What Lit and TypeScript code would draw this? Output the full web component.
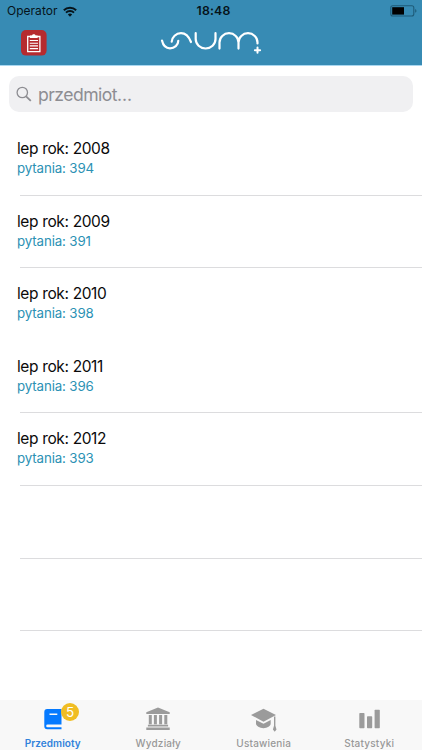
import { LitElement, html, css, svg } from "lit";
import { customElement } from "lit/decorators.js";
import { classMap } from "lit/directives/class-map.js";

const rows = [
  { title: "lep rok: 2008", sub: "pytania: 394" },
  { title: "lep rok: 2009", sub: "pytania: 391" },
  { title: "lep rok: 2010", sub: "pytania: 398", noLine: true },
  { title: "lep rok: 2011", sub: "pytania: 396" },
  { title: "lep rok: 2012", sub: "pytania: 393" },
  {},
  {},
] as { title?: string; sub?: string; noLine?: boolean }[];

const tabs = [
  {
    label: "Przedmioty",
    active: true,
    badge: "5",
    icon: svg`<path fill-rule="evenodd" d="M8.200 5H22.500V20.600H8.500a1.100 1.100 0 0 0 0 2.600H22.500V25.200H8.200a2.900 2.900 0 0 1-2.900-2.900V7.900A2.900 2.900 0 0 1 8.200 5ZM10.500 9.600v1.500h7.800V9.600Z"/>`,
  },
  {
    label: "Wydziały",
    icon: svg`<path d="M13 3.500 24.700 8.300v1.700H1.300V8.300ZM3.800 11h3v9.200h-3zM8.900 11h3v9.200h-3zM14.100 11h3v9.200h-3zM19.300 11h3v9.200h-3zM2.900 20.800h20.200v1.800H2.900zM1.300 23.600h23.400V26H1.300z"/>`,
  },
  {
    label: "Ustawienia",
    icon: svg`<path d="M13.500 4.700 26 11 13.500 17.700 1 11ZM6 16l7.500 3.800 7.200-3.700v3.400c0 2.500-3.400 4.700-7.200 4.700S6 22 6 19.500ZM24 12.600h1.400v9.200l1.100 3.600-1.800 2.300-1.800-2.300 1.100-3.600Z"/>`,
  },
  {
    label: "Statystyki",
    icon: svg`<rect x="3.300" y="9" width="5.200" height="15.300" rx=".7"/><rect x="11" y="12.300" width="5.200" height="12" rx=".7"/><rect x="18.600" y="5.700" width="5.200" height="18.600" rx=".7"/>`,
  },
];

@customElement("app-root")
export class AppRoot extends LitElement {
  static styles = css`
    :host {
      display: flex;
      flex-direction: column;
      width: 422px;
      height: 750px;
      overflow: hidden;
      background: #fff;
      font-family: Inter, "Liberation Sans", sans-serif;
      box-sizing: border-box;
    }
    svg { display: block; }
    .header {
      height: 66px;
      flex: none;
      box-sizing: border-box;
      background: #378bb4;
      border-bottom: 1px solid #a9d7f0;
    }
    .status {
      display: grid;
      grid-template-columns: 1fr auto 1fr;
      align-items: center;
      height: 22px;
      padding: 0 4px 0 7px;
      font-size: 12px;
      line-height: 22px;
      color: #06131a;
    }
    .carrier { display: flex; align-items: center; gap: 6px; letter-spacing: 0.02px; }
    .time { font-weight: 600; font-size: 12.3px; letter-spacing: 0.15px; padding-left: 2px; }
    .battery { justify-self: end; }
    .nav {
      display: grid;
      grid-template-columns: 1fr 102px 1fr;
      height: 43px;
      padding: 0 21px;
    }
    .clip { margin-top: 8px; }
    .logo { margin-top: 6px; }
    .search {
      flex: none;
      display: flex;
      align-items: center;
      gap: 5px;
      height: 36px;
      margin: 10px 9px 0 9px;
      padding-left: 7px;
      border-radius: 10px;
      background: #f0f0f2;
      color: #8d8d92;
      font-size: 17.6px;
      letter-spacing: -0.55px;
    }
    .dots { letter-spacing: 0; }
    .list { flex: 1; padding-top: 11px; }
    .row {
      height: 72.6px;
      box-sizing: border-box;
      padding: 15px 0 0 17px;
      background: linear-gradient(#dcdcde, #dcdcde) 20px 100% / 100% 1px no-repeat;
    }
    .noline { background: none; }
    .title { font-size: 15.5px; line-height: 22px; color: #0a0a0a; letter-spacing: -0.42px; word-spacing: 0.3px; }
    .sub { font-size: 13.3px; line-height: 16px; color: #2b91b4; letter-spacing: -0.13px; }
    .tabs {
      flex: none;
      display: grid;
      grid-template-columns: repeat(4, 1fr);
      height: 50px;
      background: #f8f8f8;
      color: #999;
    }
    .tab {
      display: flex;
      flex-direction: column;
      align-items: center;
      padding-top: 4px;
      font-size: 10px;
      line-height: 15px;
      font-weight: 500;
      letter-spacing: 0.2px;
    }
    .icon { position: relative; width: 27px; height: 28px; margin-bottom: 4px; fill: #9b9b9b; }
    .active { color: #3182db; font-weight: 600; letter-spacing: 0.05px; }
    .active .icon { fill: #057aff; }
    .badge {
      position: absolute;
      left: 22px;
      top: -1px;
      width: 18px;
      height: 18px;
      border-radius: 9px;
      background: #f0bd23;
      color: #fff;
      font-size: 13.5px;
      line-height: 18px;
      font-weight: 400;
      text-align: center;
    }
  `;

  render() {
    return html`
      <div class="header">
        <div class="status">
          <div class="carrier">
            <span>Operator</span>
            <svg width="14" height="11" viewBox="0 0 15 11" fill="none" stroke="#06131a" stroke-width="2.1">
              <path d="M.9 4.200a9.400 9.400 0 0 1 13.200 0M3.200 6.700a6.200 6.200 0 0 1 8.600 0" />
              <path d="M7.500 11 5.200 8.700a3.300 3.300 0 0 1 4.600 0Z" fill="#06131a" stroke="none" />
            </svg>
          </div>
          <div class="time">18:48</div>
          <svg class="battery" width="28" height="12" viewBox="0 0 28 12">
            <rect x=".8" y=".8" width="23" height="10.2" rx="2" fill="none" stroke="#1e5b78" stroke-width="1.1" />
            <rect x="2.2" y="2.2" width="11.8" height="7.4" fill="#000" />
            <path d="M25.2 4c1.7.5 1.7 3.3 0 3.8Z" fill="#1e5b78" />
          </svg>
        </div>
        <div class="nav">
          <svg class="clip" width="26" height="26" viewBox="0 0 26 26">
            <rect width="25.600" height="25.600" rx="5" fill="#b62b2f" />
            <path d="M6.700 6.500h12.200v15.200H6.700Z" fill="none" stroke="#fff" stroke-width="1.300" />
            <path d="M9 5.500h2c.2-1.800 3.400-1.800 3.600 0h2v2.500H9Z" fill="#fff" />
            <path d="M8.800 10.500h8.200M8.800 13.200h8.200M8.800 15.900h8.200M8.800 18.600h8.200" stroke="#fff" stroke-width="1.100" />
          </svg>
          <svg class="logo" width="102" height="28" viewBox="160 28 102 28" fill="none" stroke="#fff" stroke-width="2.2" stroke-linecap="round">
            <path d="M162 40.500C163 45 166 48.300 170 48.300C174.500 48.300 178.300 45 178.300 40.800M171.700 41.700C172 37 176 33.200 181 33.200C186 33.200 189 37 191 42" />
            <path d="M195.700 33.200V39a9.900 9.500 0 0 0 19.800 0V33.200" />
            <path d="M219.500 48.600V42.500a9.500 9.300 0 0 1 19 0V48.600M238.500 42.500a9.500 9.300 0 0 1 19 0V43.500" />
            <path d="M257.500 47.600v5.200M254.900 50.200h5.200" stroke-width="2" />
          </svg>
        </div>
      </div>
      <div class="search">
        <svg width="17" height="17" viewBox="0 0 17 17" fill="none" stroke="#8d8d92" stroke-width="1.300">
          <circle cx="6.300" cy="6.500" r="5.200" /><path d="m10.100 10.300 4.700 4.600" stroke-width="1.800" />
        </svg>
        <span>przedmiot<span class="dots">...</span></span>
      </div>
      <div class="list">
        ${rows.map(
          (r) => html`<div class=${classMap({ row: true, noline: !!r.noLine })}>
            <div class="title">${r.title}</div>
            <div class="sub">${r.sub}</div>
          </div>`
        )}
      </div>
      <div class="tabs">
        ${tabs.map(
          (t) => html`<div class=${classMap({ tab: true, active: !!t.active })}>
            <div class="icon">
              <svg width="27" height="28" viewBox="0 0 27 28">${t.icon}</svg>
              ${t.badge ? html`<span class="badge">${t.badge}</span>` : ""}
            </div>
            <span>${t.label}</span>
          </div>`
        )}
      </div>
    `;
  }
}
